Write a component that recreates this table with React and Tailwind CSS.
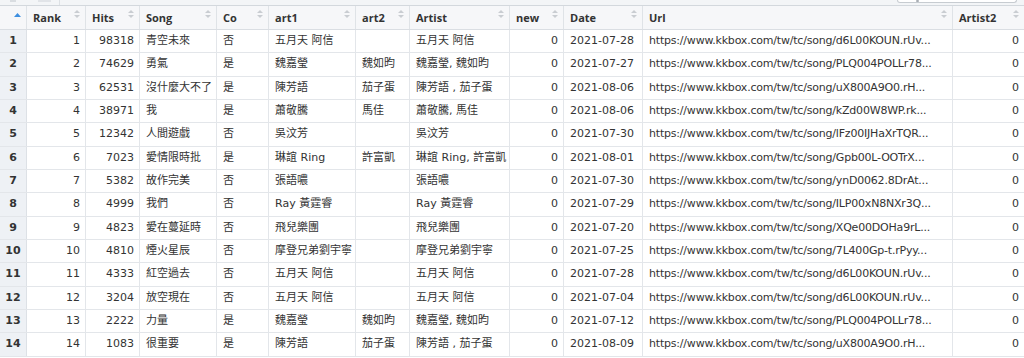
import React from "react";

const URLP = "https://www.kkbox.com/tw/tc/song/";

const rows = [
  [1, 98318, "青空未來", "否", "五月天 阿信", "", "五月天 阿信", 0, "2021-07-28", "d6L00KOUN.rUv...", 0],
  [2, 74629, "勇氣", "是", "魏嘉瑩", "魏如昀", "魏嘉瑩, 魏如昀", 0, "2021-07-27", "PLQ004POLLr78...", 0],
  [3, 62531, "沒什麼大不了", "是", "陳芳語", "茄子蛋", "陳芳語 , 茄子蛋", 0, "2021-08-06", "uX800A9O0.rH...", 0],
  [4, 38971, "我", "是", "蕭敬騰", "馬佳", "蕭敬騰, 馬佳", 0, "2021-08-06", "kZd00W8WP.rk...", 0],
  [5, 12342, "人間遊戲", "否", "吳汶芳", "", "吳汶芳", 0, "2021-07-30", "lFz00IJHaXrTQR...", 0],
  [6, 7023, "愛情限時批", "是", "琳誼 Ring", "許富凱", "琳誼 Ring, 許富凱", 0, "2021-08-01", "Gpb00L-OOTrX...", 0],
  [7, 5382, "故作完美", "否", "張語噥", "", "張語噥", 0, "2021-07-30", "ynD0062.8DrAt...", 0],
  [8, 4999, "我們", "否", "Ray 黃霆睿", "", "Ray 黃霆睿", 0, "2021-07-29", "ILP00xN8NXr3Q...", 0],
  [9, 4823, "愛在蔓延時", "否", "飛兒樂團", "", "飛兒樂團", 0, "2021-07-20", "XQe00DOHa9rL...", 0],
  [10, 4810, "煙火星辰", "否", "摩登兄弟劉宇寧", "", "摩登兄弟劉宇寧", 0, "2021-07-25", "7L400Gp-t.rPyy...", 0],
  [11, 4333, "紅空過去", "否", "五月天 阿信", "", "五月天 阿信", 0, "2021-07-28", "d6L00KOUN.rUv...", 0],
  [12, 3204, "放空現在", "否", "五月天 阿信", "", "五月天 阿信", 0, "2021-07-04", "d6L00KOUN.rUv...", 0],
  [13, 2222, "力量", "是", "魏嘉瑩", "魏如昀", "魏嘉瑩, 魏如昀", 0, "2021-07-12", "PLQ004POLLr78...", 0],
  [14, 1083, "很重要", "是", "陳芳語", "茄子蛋", "陳芳語 , 茄子蛋", 0, "2021-08-09", "uX800A9O0.rH...", 0],
];

const headers = ["Rank", "Hits", "Song", "Co", "art1", "art2", "Artist", "new", "Date", "Url", "Artist2"];
const rightAligned = [true, true, false, false, false, false, false, true, false, false, true];

const GRID = "grid grid-cols-[27px_59px_54px_77px_52px_87px_54px_100px_54px_79px_310px_71px]";

function SortIcon() {
  return (
    <svg width="6" height="8" viewBox="0 0 6 8" className="shrink-0 self-start mt-[4px]">
      <polygon points="3,0 6,3 0,3" fill="#c9cdd2" />
      <polygon points="0,5 6,5 3,8" fill="#c9cdd2" />
    </svg>
  );
}

export default function App() {
  return (
    <div className="w-[1024px] h-[358px] overflow-hidden bg-white text-[#333]">
      {/* toolbar strip */}
      <div className="h-[6px] bg-[#f3f5f7] border-b border-[#d3d8dd] flex items-start">
        <div className="ml-[10px] w-[6px] h-[2px] bg-[#d9dde1]" />
        <div className="ml-[22px] w-[13px] h-[2px] bg-[#e1e4e8]" />
        <div className="ml-[8px] w-px h-[5px] bg-[#dde1e5]" />
        <div className="ml-auto mr-[7px] w-[120px] h-[3px] bg-white border border-t-0 border-[#c7ccd1] rounded-b-[3px] flex items-end pl-[18px]">
          <div className="w-[3px] h-[2px] rounded-full bg-[#a9aeb4]" />
        </div>
      </div>

      {/* header */}
      <div
        className={`${GRID} h-[24px] bg-[#f6f7f9] border-b border-[#dadee3] font-bold text-[11px] text-[#333]`}
        style={{ fontFamily: '"Open Sans", "Noto Sans CJK TC", sans-serif' }}
      >
        <div className="border-r border-[#dfe3e7] flex justify-end items-start pr-[5px] pt-[7px]">
          <svg width="7" height="4" viewBox="0 0 7 4">
            <polygon points="3.5,0 7,4 0,4" fill="#3d8fe0" />
          </svg>
        </div>
        {headers.map((h) => (
          <div
            key={h}
            className="border-r border-[#dfe3e7] flex items-center justify-between pl-[6px] pr-[5px] last:border-r-0"
          >
            <span className="leading-none">{h}</span>
            <SortIcon />
          </div>
        ))}
      </div>

      {/* rows */}
      <div
        className="text-[11px] text-[#333]"
        style={{ fontFamily: '"DejaVu Sans", "Noto Sans CJK TC", sans-serif' }}
      >
        {rows.map((r) => (
          <div key={r[0]} className={`${GRID} h-[23.34px] border-b border-[#e3e6ea]`}>
            <div className="bg-[#eef1f5] border-r border-[#dde1e6] flex items-center justify-center font-bold text-[#333]">
              {r[0]}
            </div>
            {r.map((v, i) => {
              if (i === 9) {
                return (
                  <div
                    key={i}
                    className="border-r border-[#e3e6ea] flex items-center justify-start pl-[6px] whitespace-nowrap overflow-hidden tracking-[-0.2px] text-[#333]"
                  >
                    {URLP + v}
                  </div>
                );
              }
              return (
                <div
                  key={i}
                  className={
                    rightAligned[i]
                      ? "border-r border-[#e3e6ea] flex items-center justify-end pr-[5px] whitespace-nowrap overflow-hidden last:border-r-0 text-[#333]"
                      : "border-r border-[#e3e6ea] flex items-center justify-start pl-[6px] whitespace-nowrap overflow-hidden text-[#333]"
                  }
                >
                  {String(v)}
                </div>
              );
            })}
          </div>
        ))}
      </div>
    </div>
  );
}
